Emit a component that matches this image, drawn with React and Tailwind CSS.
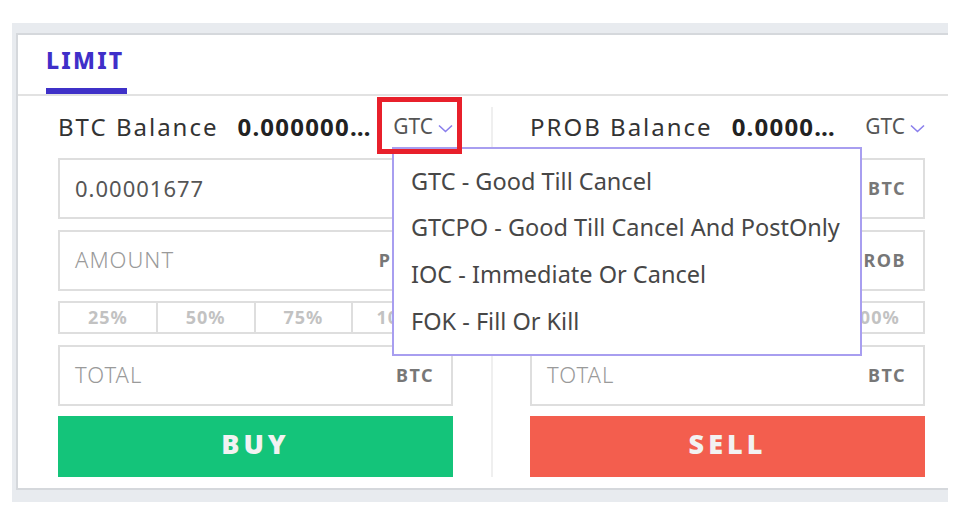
import React from "react";

const percents = ["25%", "50%", "75%", "100%"];

const tifOptions = [
  "GTC - Good Till Cancel",
  "GTCPO - Good Till Cancel And PostOnly",
  "IOC - Immediate Or Cancel",
  "FOK - Fill Or Kill",
];

function Chevron() {
  return (
    <svg width="15" height="9" viewBox="0 0 15 9" className="ml-[5px] mt-[3px]">
      <path d="M1 1.5 L7.5 7.5 L14 1.5" fill="none" stroke="#8a7fec" strokeWidth="1.6" />
    </svg>
  );
}

function Field({ value, placeholder, unit }) {
  return (
    <div className="h-[61px] border-2 border-[#dedede] bg-white flex items-center pl-[15px] pr-[17px]">
      {value ? (
        <span className="text-[22px] tracking-[1px] text-[#555]">{value}</span>
      ) : (
        <span className="text-[22px] tracking-[1px] font-light text-[#9a9a9a] pb-[2px]">{placeholder}</span>
      )}
      <span className="ml-auto text-[18px] font-bold tracking-[1.5px] text-[#777]">{unit}</span>
    </div>
  );
}

function OrderColumn({ coin, balance, quote, base, price, action, color }) {
  return (
    <div className="w-[395px] flex flex-col">
      <div className="h-[40px] flex items-center">
        <span className="text-[24px] tracking-[2px] text-[#333] whitespace-nowrap">{coin} Balance</span>
        <span className="ml-[19px] text-[24px] font-bold tracking-[1.2px] text-[#222] whitespace-nowrap">{balance}</span>
        <div className="ml-auto flex items-center">
          <span className="text-[21px] text-[#555]">GTC</span>
          <Chevron />
        </div>
      </div>
      <div className="mt-[11px]">
        <Field value={price} placeholder="PRICE" unit={quote} />
      </div>
      <div className="mt-[11px]">
        <Field placeholder="AMOUNT" unit={base} />
      </div>
      <div className="mt-[10px] h-[33px] grid grid-cols-4 border-2 border-[#dedede] divide-x-2 divide-[#dedede]">
        {percents.map((p) => (
          <div key={p} className="flex items-center justify-center text-[18px] font-bold tracking-[1px] text-[#c2c2c2]">
            {p}
          </div>
        ))}
      </div>
      <div className="mt-[11px]">
        <Field placeholder="TOTAL" unit={quote} />
      </div>
      <button className={`mt-[10px] h-[61px] pb-[5px] flex items-center justify-center text-[27px] font-black tracking-[4px] text-[#f2f2f2] ${color}`}>
        {action}
      </button>
    </div>
  );
}

export default function App() {
  return (
    <div className="min-h-screen bg-white font-['Noto_Sans',sans-serif] relative">
      <div className="pt-[23px] pl-[12px]">
        <div className="w-[936px] overflow-hidden bg-[#e8ebef] pl-[4px] pt-[10px] pb-[12px]">
          <div className="w-[955px] border-2 border-[#d5d8dc] bg-white">
            {/* Tabs */}
            <div className="h-[59px] flex items-end pl-[28px]">
              <div className="flex flex-col">
                <span className="text-[23px] font-extrabold tracking-[2.2px] text-[#3f2fc9] leading-none mb-[16px]">LIMIT</span>
                <div className="w-[81px] h-[6px] bg-[#3f31c8]" />
              </div>
            </div>
            <div className="h-[2px] bg-[#e2e2e2]" />

            {/* Order forms */}
            <div className="relative flex pl-[40px] pt-[11px] pb-[11px]">
              <OrderColumn
                coin="BTC"
                balance="0.000000…"
                quote="BTC"
                base="PROB"
                price="0.00001677"
                action="BUY"
                color="bg-[#14c47a]"
              />
              <div className="w-[77px] flex justify-center">
                <div className="w-[2px] bg-[#efefef]" />
              </div>
              <OrderColumn
                coin="PROB"
                balance="0.0000…"
                quote="BTC"
                base="PROB"
                price="0.00001677"
                action="SELL"
                color="bg-[#f35e4e]"
              />

              {/* Time-in-force dropdown */}
              <div className="absolute left-[374px] top-[51px] w-[470px] h-[209px] border-2 border-[#a89ef0] bg-white pt-[9px] pl-[17px]">
                {tifOptions.map((o) => (
                  <div key={o} className="h-[46.7px] flex items-center text-[23.5px] text-[#474747] whitespace-nowrap">
                    {o}
                  </div>
                ))}
              </div>
            </div>
          </div>
        </div>
      </div>

      {/* highlight frame */}
      <div className="absolute left-[377px] top-[97px] w-[85px] h-[57px] border-[5px] border-[#e8202b]" />
    </div>
  );
}
